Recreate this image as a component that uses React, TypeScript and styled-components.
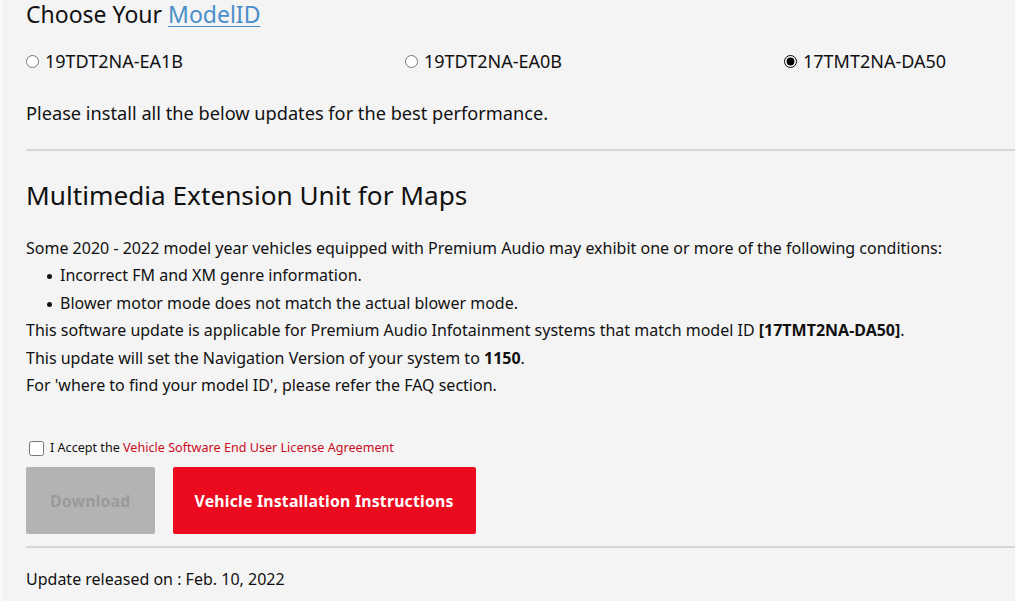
import React, { useState } from 'react'
import styled, { createGlobalStyle } from 'styled-components'

const models = ['19TDT2NA-EA1B', '19TDT2NA-EA0B', '17TMT2NA-DA50']

const GlobalStyle = createGlobalStyle`
  html, body {
    margin: 0;
    padding: 0;
    background: #f4f4f4;
    overflow: hidden;
  }
  body {
    font-family: 'Noto Sans', 'Open Sans', sans-serif;
    color: #111;
  }
`

const App: React.FC = () => {
  const [selected, setSelected] = useState(models[2])
  const [accepted, setAccepted] = useState(false)

  return (
    <Page>
      <GlobalStyle />
      <Content>
        <Title>
          Choose Your <TitleLink href="#">ModelID</TitleLink>
        </Title>

        <RadioRow>
          {models.map(m => (
            <RadioLabel key={m}>
              <Radio
                type="radio"
                name="model"
                checked={selected === m}
                onChange={() => setSelected(m)}
              />
              {m}
            </RadioLabel>
          ))}
        </RadioRow>

        <Intro>Please install all the below updates for the best performance.</Intro>

        <Divider gap={24} />

        <SectionTitle>Multimedia Extension Unit for Maps</SectionTitle>

        <Body>
          <Line>Some 2020 - 2022 model year vehicles equipped with Premium Audio may exhibit one or more of the following conditions:</Line>
          <Bullets>
            <li>Incorrect FM and XM genre information.</li>
            <li>Blower motor mode does not match the actual blower mode.</li>
          </Bullets>
          <Line>This software update is applicable for Premium Audio Infotainment systems that match model ID <b>[17TMT2NA-DA50]</b>.</Line>
          <Line>This update will set the Navigation Version of your system to <b>1150</b>.</Line>
          <Line>For 'where to find your model ID', please refer the FAQ section.</Line>
        </Body>

        <AcceptRow>
          <Checkbox
            type="checkbox"
            checked={accepted}
            onChange={e => setAccepted(e.target.checked)}
          />
          I Accept the <AcceptLink href="#">Vehicle Software End User License Agreement</AcceptLink>
        </AcceptRow>

        <Buttons>
          <Button disabled={!accepted} variant="grey">Download</Button>
          <Button variant="red">Vehicle Installation Instructions</Button>
        </Buttons>

        <Divider gap={12} />

        <Released>Update released on : Feb. 10, 2022</Released>
      </Content>
    </Page>
  )
}

const Page = styled.div`
  min-height: 601px;
  border-left: 3px solid #f9f9f9;
  box-sizing: border-box;
`

const Content = styled.div`
  width: 1150px;
  padding-left: 23px;
`

const Title = styled.h1`
  margin: 0;
  font-size: 23px;
  font-weight: 400;
  line-height: 28px;
`

const TitleLink = styled.a`
  color: #4a8fc9;
  text-decoration: underline;
  text-underline-offset: 3px;
  text-decoration-thickness: 1px;
`

const RadioRow = styled.div`
  display: grid;
  grid-template-columns: repeat(3, 379px);
  margin-top: 21px;
`

const RadioLabel = styled.label`
  display: flex;
  align-items: center;
  gap: 6px;
  font-size: 18px;
  line-height: 24px;
`

const Radio = styled.input`
  margin: 0;
  width: 13px;
  height: 13px;
  accent-color: #000;
`

const Intro = styled.p`
  margin: 28px 0 0;
  font-size: 18.2px;
  line-height: 24px;
`

const Divider = styled.hr<{ gap: number }>`
  border: 0;
  border-top: 2px solid #d6d6d6;
  margin: ${p => p.gap}px 0 0;
`

const SectionTitle = styled.h2`
  margin: 26px 0 0;
  font-size: 26.2px;
  font-weight: 400;
  line-height: 36px;
`

const Body = styled.div`
  margin-top: 22px;
  font-size: 16px;
  line-height: 27.4px;
`

const Line = styled.div`
  b {
    font-weight: 700;
  }
`

const Bullets = styled.ul`
  margin: 0;
  padding-left: 34px;
  li {
    list-style: none;
    position: relative;
  }
  li::before {
    content: '';
    position: absolute;
    left: -13px;
    top: 12px;
    width: 5px;
    height: 5px;
    border-radius: 50%;
    background: #111;
  }
`

const AcceptRow = styled.label`
  display: flex;
  align-items: center;
  margin-top: 39px;
  font-size: 12.6px;
  line-height: 20px;
  white-space: pre;
`

const Checkbox = styled.input`
  margin: 0 6px 0 3px;
  width: 15px;
  height: 15px;
`

const AcceptLink = styled.a`
  color: #cc0a1e;
  text-decoration: none;
`

const Buttons = styled.div`
  display: flex;
  gap: 18px;
  margin-top: 9px;
`

const Button = styled.button<{ variant: 'grey' | 'red' }>`
  height: 67px;
  border: 0;
  border-radius: 2px;
  font-family: inherit;
  font-size: 15.8px;
  font-weight: 700;
  letter-spacing: 0.2px;
  padding: 0 ${p => (p.variant === 'grey' ? '24px' : '22px')};
  background: ${p => (p.variant === 'grey' ? '#b3b3b3' : '#eb0a1e')};
  color: ${p => (p.variant === 'grey' ? '#9a9a9a' : '#fff')};
  cursor: ${p => (p.variant === 'grey' ? 'default' : 'pointer')};
`

const Released = styled.p`
  margin: 19px 0 0;
  font-size: 16px;
  line-height: 24px;
`

export default App
